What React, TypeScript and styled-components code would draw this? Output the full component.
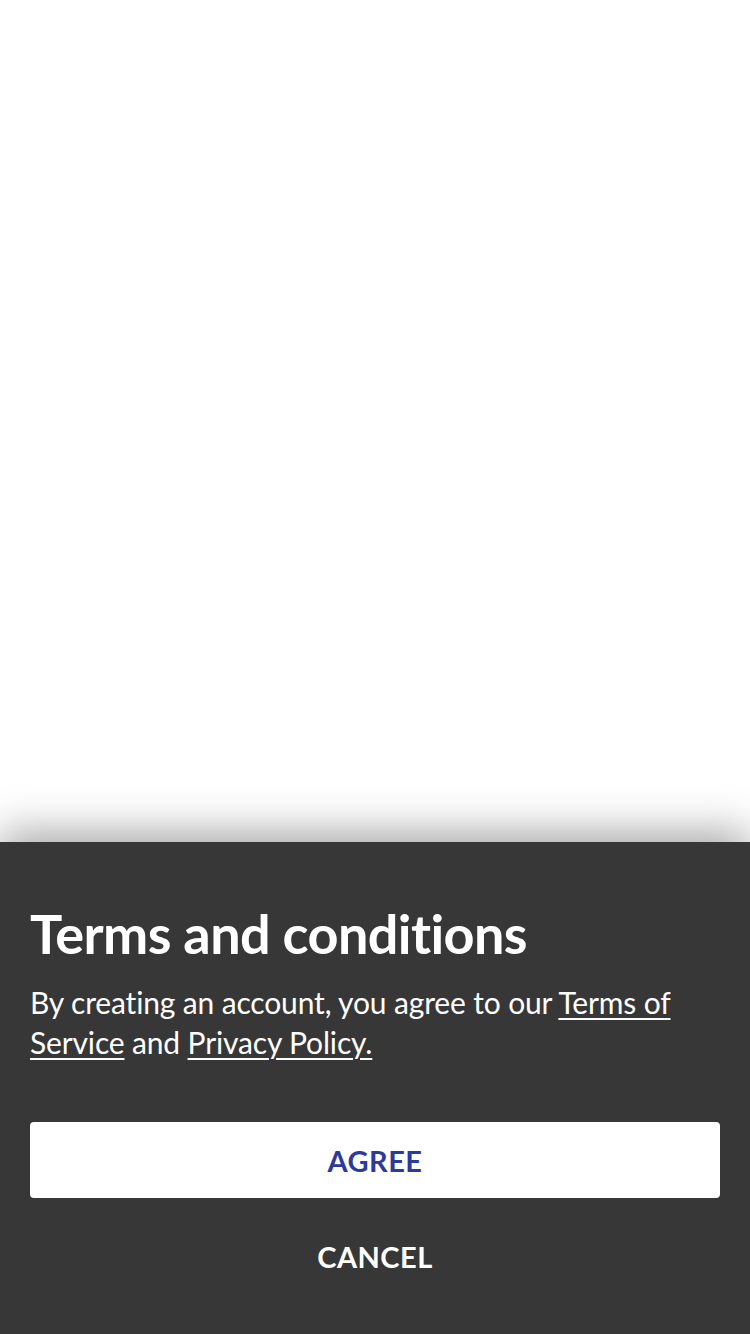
import React from "react";
import styled, { createGlobalStyle } from "styled-components";

const Global = createGlobalStyle`
  html, body { margin: 0; padding: 0; background: #ffffff; }
  body { font-family: Lato, "Open Sans", sans-serif; }
  #root { min-height: 1334px; display: flex; flex-direction: column; }
`;

const Page = styled.div`
  flex: 1;
  display: flex;
  flex-direction: column;
  justify-content: flex-end;
  min-height: 1334px;
  background: #ffffff;
`;

const Sheet = styled.section`
  background: #373737;
  box-shadow: 0 -10px 40px rgba(0, 0, 0, 0.35);
  padding: 62px 30px 40px;
  display: flex;
  flex-direction: column;
  color: #ffffff;
`;

const Title = styled.h1`
  margin: 0;
  font-family: Lato, sans-serif;
  font-weight: 700;
  font-size: 54px;
  line-height: 60px;
  letter-spacing: -0.6px;
`;

const Body = styled.p`
  margin: 18px 0 0;
  font-family: Lato, sans-serif;
  font-size: 30px;
  line-height: 40px;
  letter-spacing: -0.15px;
`;

const Link = styled.a`
  color: #ffffff;
  text-decoration: underline;
  text-underline-offset: 4px;
  text-decoration-thickness: 2px;
`;

const Button = styled.button<{ $primary?: boolean }>`
  height: 76px;
  border: none;
  border-radius: 4px;
  font-family: Lato, sans-serif;
  font-weight: 700;
  font-size: 29px;
  letter-spacing: 0.5px;
  background: ${(p) => (p.$primary ? "#ffffff" : "transparent")};
  color: ${(p) => (p.$primary ? "#2d3a9a" : "#ffffff")};
`;

const Actions = styled.div`
  margin-top: 60px;
  display: flex;
  flex-direction: column;
  gap: 20px;
`;

export default function App() {
  return (
    <>
      <Global />
      <Page>
        <Sheet>
          <Title>Terms and conditions</Title>
          <Body>
            By creating an account, you agree to our <Link>Terms of Service</Link> and{" "}
            <Link>Privacy Policy.</Link>
          </Body>
          <Actions>
            <Button $primary>AGREE</Button>
            <Button>CANCEL</Button>
          </Actions>
        </Sheet>
      </Page>
    </>
  );
}
